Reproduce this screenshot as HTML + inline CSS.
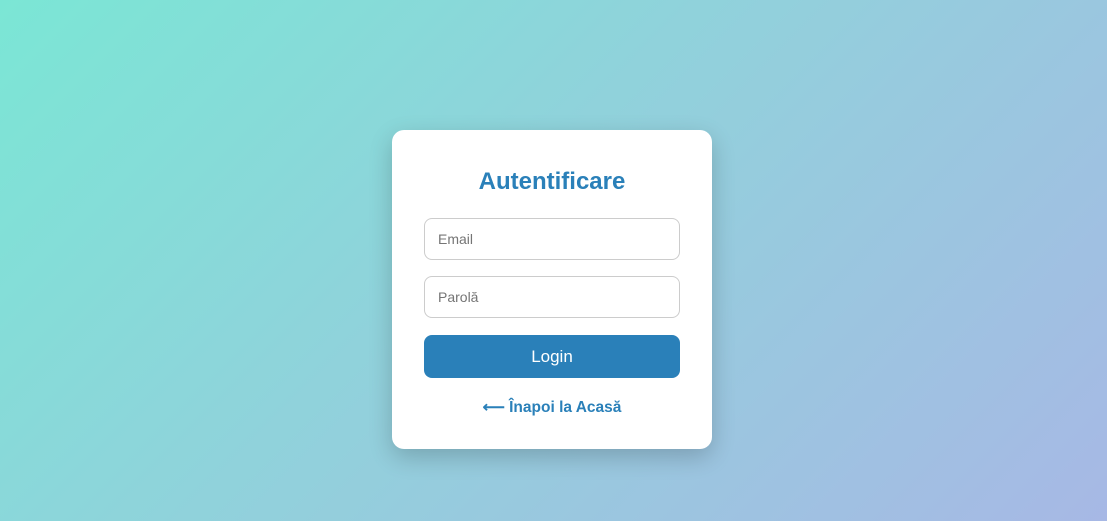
<!DOCTYPE html>
<html><head><meta charset="utf-8"><style>
html,body{margin:0;padding:0;width:1107px;height:521px;overflow:hidden}
body{background:linear-gradient(135deg,#7be6d5 0%,#93cfdc 50%,#a7b8e5 100%);font-family:"Liberation Sans",sans-serif;position:relative}
.card{position:absolute;left:392px;top:130px;width:320px;height:319px;background:#fff;border-radius:12px;box-shadow:0 8px 24px rgba(0,0,0,0.2)}
h2{position:absolute;top:36px;left:0;right:0;margin:0;text-align:center;color:#2a80b9;font-size:24px;font-weight:bold;line-height:32px}
.in{position:absolute;left:32px;height:40px;border:1px solid #ccc;border-radius:8px;box-sizing:content-box;color:#757575;font-size:14px;line-height:40px;padding-left:13px;width:241px}
.btn{position:absolute;left:32px;top:205px;width:256px;height:43px;background:#2a80b9;border-radius:8px;color:#fff;font-size:17px;text-align:center;line-height:43px}
.link{position:absolute;top:266px;left:0;right:0;text-align:center;color:#2a80b9;font-weight:bold;font-size:15.5px;line-height:24px}
</style></head><body>
<div class="card">
<h2>Autentificare</h2>
<div class="in" style="top:88px">Email</div>
<div class="in" style="top:146px">Parolă</div>
<div class="btn">Login</div>
<div class="link">⟵ Înapoi la Acasă</div>
</div>
</body></html>
